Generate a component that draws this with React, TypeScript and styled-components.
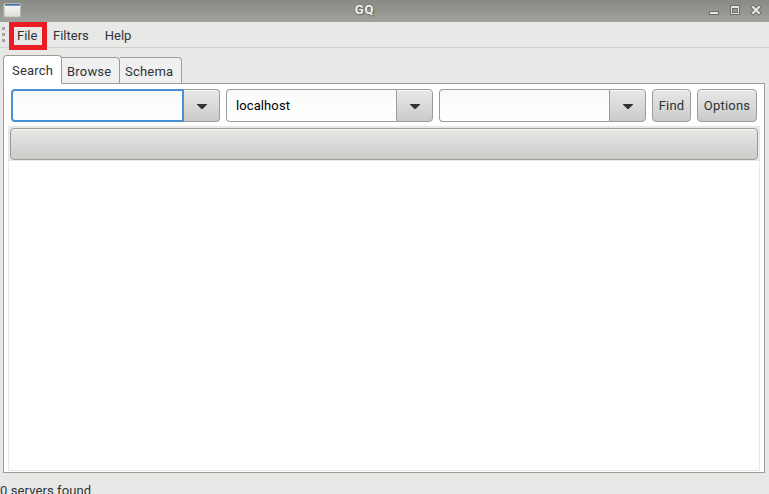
import React from "react";
import styled, { createGlobalStyle, css } from "styled-components";

const GlobalStyle = createGlobalStyle`
  * { box-sizing: border-box; }
  body { margin: 0; overflow: hidden; }
`;

const line = "#9c9c98";

const raised = css`
  background: linear-gradient(#e8e8e6, #cbcbc9);
  box-shadow: inset 0 1px 0 #f8f8f7;
`;

const Window = styled.div`
  width: 769px;
  height: 494px;
  overflow: hidden;
  display: flex;
  flex-direction: column;
  background: #e8e8e6;
  color: #2e3436;
  font: 13px/16px Roboto, sans-serif;
  letter-spacing: 0.2px;
  white-space: nowrap;
`;

const TitleBar = styled.header`
  height: 22px;
  flex: none;
  display: grid;
  grid-template-columns: 54px 1fr 54px;
  align-items: start;
  padding: 3px 7px 0 3px;
  background: linear-gradient(#888a84, #a0a29b);
`;

const Title = styled.div`
  padding-right: 36px;
  margin-top: -1px;
  text-align: center;
  color: #f2f2f0;
  font-weight: 700;
  letter-spacing: 0.8px;
  text-shadow: 0 0 2px #5c5e59, 1px 1px 1px #6c6e68;
`;

const Controls = styled.div`
  display: flex;
  justify-content: flex-end;
  padding-top: 1px;
`;

const MenuBar = styled.nav`
  height: 26px;
  flex: none;
  display: flex;
  align-items: flex-start;
  border-bottom: 1px solid #d0d0ce;
  letter-spacing: 0;
`;

const Grip = styled.div`
  width: 9px;
  padding: 5px 0 0 2px;
  display: grid;
  gap: 3px;
`;

const GripDot = styled.i`
  width: 3px;
  height: 3px;
  background: #a3a3a0;
`;

const MenuItem = styled.div<{ $marked?: boolean }>`
  height: 28px;
  flex: none;
  padding: ${(p) => (p.$marked ? "1px 3px" : "6px 8px")};
  ${(p) =>
    p.$marked &&
    css`
      width: 38px;
      border: 5px solid #ed1c24;
      margin-right: -2px;
    `}
`;

const Tabs = styled.div`
  height: 29px;
  flex: none;
  display: flex;
  align-items: flex-end;
  margin: 7px 4px -1px 3px;
  position: relative;
`;

const Tab = styled.div<{ $active?: boolean; $width: number }>`
  width: ${(p) => p.$width}px;
  height: ${(p) => (p.$active ? 29 : 27)}px;
  padding: ${(p) => (p.$active ? "7px 0 0 8px" : "6px 0 0 5px")};
  border: 1px solid ${line};
  border-left-width: ${(p) => (p.$active ? 1 : 0)}px;
  border-bottom-color: ${(p) => (p.$active ? "#fff" : line)};
  border-radius: ${(p) => (p.$active ? "4px 4px 0 0" : "0 4px 0 0")};
  background: ${(p) => (p.$active ? "#fff" : "#f0f0f0")};
`;

const Panel = styled.main`
  height: 390px;
  flex: none;
  margin: 0 4px 0 3px;
  padding: 5px 4px 1px;
  border: 1px solid ${line};
  background: #fff;
  display: flex;
  flex-direction: column;
`;

const SearchRow = styled.div`
  display: flex;
  gap: 6px;
  height: 33px;
  padding: 0 3px;
  margin-bottom: 4px;
`;

const Combo = styled.div<{ $width: number }>`
  display: flex;
  width: ${(p) => p.$width}px;
`;

const Entry = styled.div<{ $focused?: boolean }>`
  flex: 1;
  padding: ${(p) => (p.$focused ? "7px 8px" : "8px 9px")};
  border: ${(p) => (p.$focused ? "2px solid #4a90d9" : `1px solid ${line}`)};
  border-right-width: ${(p) => (p.$focused ? 2 : 0)}px;
  border-radius: 4px 0 0 4px;
  background: linear-gradient(#f7f7f7, #fcfcfc 8px, #fff);
  color: #000;
  letter-spacing: 0.1px;
`;

const DropButton = styled.div<{ $joined?: boolean }>`
  width: ${(p) => (p.$joined ? 36 : 37)}px;
  display: grid;
  place-items: center;
  padding-top: 2px;
  border: 1px solid ${line};
  border-left-width: ${(p) => (p.$joined ? 0 : 1)}px;
  border-radius: 0 4px 4px 0;
  ${raised}
`;

const Button = styled.div<{ $width: number }>`
  width: ${(p) => p.$width}px;
  padding-top: 8px;
  text-align: center;
  border: 1px solid ${line};
  border-radius: 4px;
  ${raised}
`;

const Results = styled.section`
  flex: 1;
  border: 1px solid #e8e8e6;
  background: #fff;
`;

const HeaderRow = styled.div`
  height: 34px;
  padding: 1px;
  background: #e8e8e6;
`;

const ColumnHeader = styled.div`
  height: 32px;
  border: 1px solid ${line};
  border-radius: 4px;
  ${raised}
`;

const Status = styled.footer`
  padding-top: 10px;
  letter-spacing: 0.1px;
`;

function ComboBox({ width, value, focused }: { width: number; value?: string; focused?: boolean }) {
  return (
    <Combo $width={width}>
      <Entry $focused={focused}>{value}</Entry>
      <DropButton $joined={focused}>
        <svg width="10" height="5" viewBox="0 0 10 5">
          <path d="M0 0h10v.6L5.6 5H4.4L0 .6z" fill="#2e3436" />
        </svg>
      </DropButton>
    </Combo>
  );
}

function WindowIcon() {
  return (
    <svg width="18" height="15" viewBox="0 0 18 15">
      <defs>
        <linearGradient id="face" x2="0" y2="1">
          <stop stopColor="#fafafa" />
          <stop offset="1" stopColor="#dcdcda" />
        </linearGradient>
      </defs>
      <rect x="1" y="0.5" width="16.5" height="13.5" rx="1" fill="url(#face)" stroke="#b8b8b0" />
      <path d="M2 1h15v1H2z" fill="#4b6ca5" />
      <path d="M2 2h15v1H2z" fill="#7b98c8" />
    </svg>
  );
}

function WindowButtons() {
  return (
    <svg width="53" height="12" viewBox="0 0 53 12" shapeRendering="crispEdges">
      <path d="M0 7h10v4H0z" fill="#6b6d67" />
      <path d="M1 8h8v2H1z" fill="#e6e6e4" />
      <path d="M21 1h10v10H21z" fill="#6b6d67" />
      <path d="M22 2h8v8H22z" fill="#e2e2e0" />
      <path d="M23 4h6v5H23z" fill="#6b6d67" />
      <path d="M24 5h4v3H24z" fill="#989a94" />
      <g shapeRendering="auto">
        <path d="M44 3l6 6M50 3l-6 6" stroke="#6b6d67" strokeWidth="4" strokeLinecap="square" />
        <path d="M44 3l6 6M50 3l-6 6" stroke="#e6e6e4" strokeWidth="2.2" strokeLinecap="square" />
      </g>
    </svg>
  );
}

export default function App() {
  return (
    <Window>
      <GlobalStyle />
      <TitleBar>
        <WindowIcon />
        <Title>GQ</Title>
        <Controls>
          <WindowButtons />
        </Controls>
      </TitleBar>
      <MenuBar>
        <Grip>
          <GripDot />
          <GripDot />
          <GripDot />
        </Grip>
        <MenuItem $marked>File</MenuItem>
        <MenuItem>Filters</MenuItem>
        <MenuItem>Help</MenuItem>
      </MenuBar>
      <Tabs>
        <Tab $active $width={59}>Search</Tab>
        <Tab $width={58}>Browse</Tab>
        <Tab $width={62}>Schema</Tab>
      </Tabs>
      <Panel>
        <SearchRow>
          <ComboBox width={209} focused />
          <ComboBox width={207} value="localhost" />
          <ComboBox width={207} />
          <Button $width={39}>Find</Button>
          <Button $width={60}>Options</Button>
        </SearchRow>
        <Results>
          <HeaderRow>
            <ColumnHeader />
          </HeaderRow>
        </Results>
      </Panel>
      <Status>0 servers found</Status>
    </Window>
  );
}
